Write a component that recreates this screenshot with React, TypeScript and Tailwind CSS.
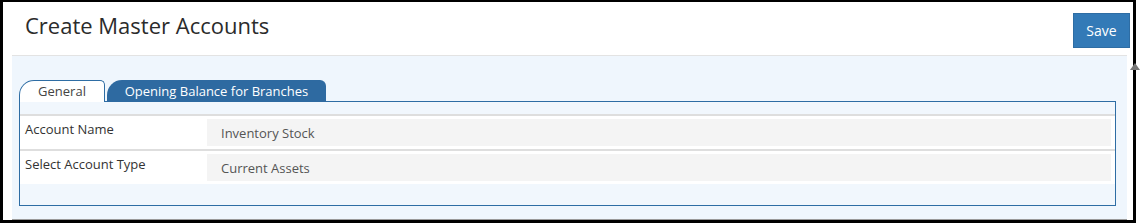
import React from 'react';

const font = { fontFamily: '"Open Sans", "Noto Sans", Arial, sans-serif' };

interface FieldRowProps {
  label: string;
  value: string;
}

const FieldRow: React.FC<FieldRowProps> = ({ label, value }) => (
  <div className="flex h-[35px] border-t-2 border-[#dedede] bg-white">
    <div className="w-[187px] shrink-0 pl-[5px] pt-[4px] text-[13px] text-[#333]">{label}</div>
    <div className="flex-1 mr-[4px] my-[3px] bg-[#f4f4f4] pl-[14px] pt-[2px] flex items-center text-[13px] text-[#555]">
      {value}
    </div>
  </div>
);

export default function App() {
  return (
    <div className="w-[1143px] h-[223px] bg-white relative" style={font}>
      <div className="w-[1136px] h-[223px] border-l-[3px] border-r-[3px] border-t-2 border-b-[3px] border-black flex flex-col">
        {/* Header */}
        <div className="h-[53px] shrink-0 flex items-start justify-between pl-[22px] pr-[3px] bg-white">
          <h1 className="text-[22px] leading-none mt-[12px] text-[#2b2b2b]">Create Master Accounts</h1>
          <button className="mt-[11px] w-[57px] h-[35px] bg-[#337ab7] border border-[#2e6da4] text-white text-[14px]">
            Save
          </button>
        </div>

        {/* Body */}
        <div className="flex-1 ml-[9px] mr-[6px] bg-[#eff6fd] border-t border-[#e3e3e3] border-b border-b-[#9a9a9a] pl-[7px] pr-[11px] pt-[24px]">
          {/* Tabs */}
          <div className="flex items-end h-[22px] relative z-10 -mb-px">
            <div className="w-[86px] h-[22px] bg-white border border-b-0 border-[#2e6da4] rounded-tl-[15px] rounded-tr-[5px] flex items-center justify-center text-[13px] text-[#444] pt-px">
              General
            </div>
            <div className="ml-[2px] w-[219px] h-[22px] bg-[#2e6aa1] rounded-tl-[15px] rounded-tr-[6px] flex items-center justify-center text-[13px] text-white pt-px">
              Opening Balance for Branches
            </div>
          </div>

          {/* Box */}
          <div className="border border-[#2e6da4] bg-[#f1f7fd] pt-[12px] pb-[24px] h-[105px]">
            <FieldRow label="Account Name" value="Inventory Stock" />
            <FieldRow label="Select Account Type" value="Current Assets" />
          </div>
        </div>
      </div>

      {/* scroll arrow */}
      <div className="absolute left-[1130px] top-[63px] w-0 h-0 border-l-[5px] border-r-[5px] border-b-[7px] border-l-transparent border-r-transparent border-b-[#777]" />
    </div>
  );
}
